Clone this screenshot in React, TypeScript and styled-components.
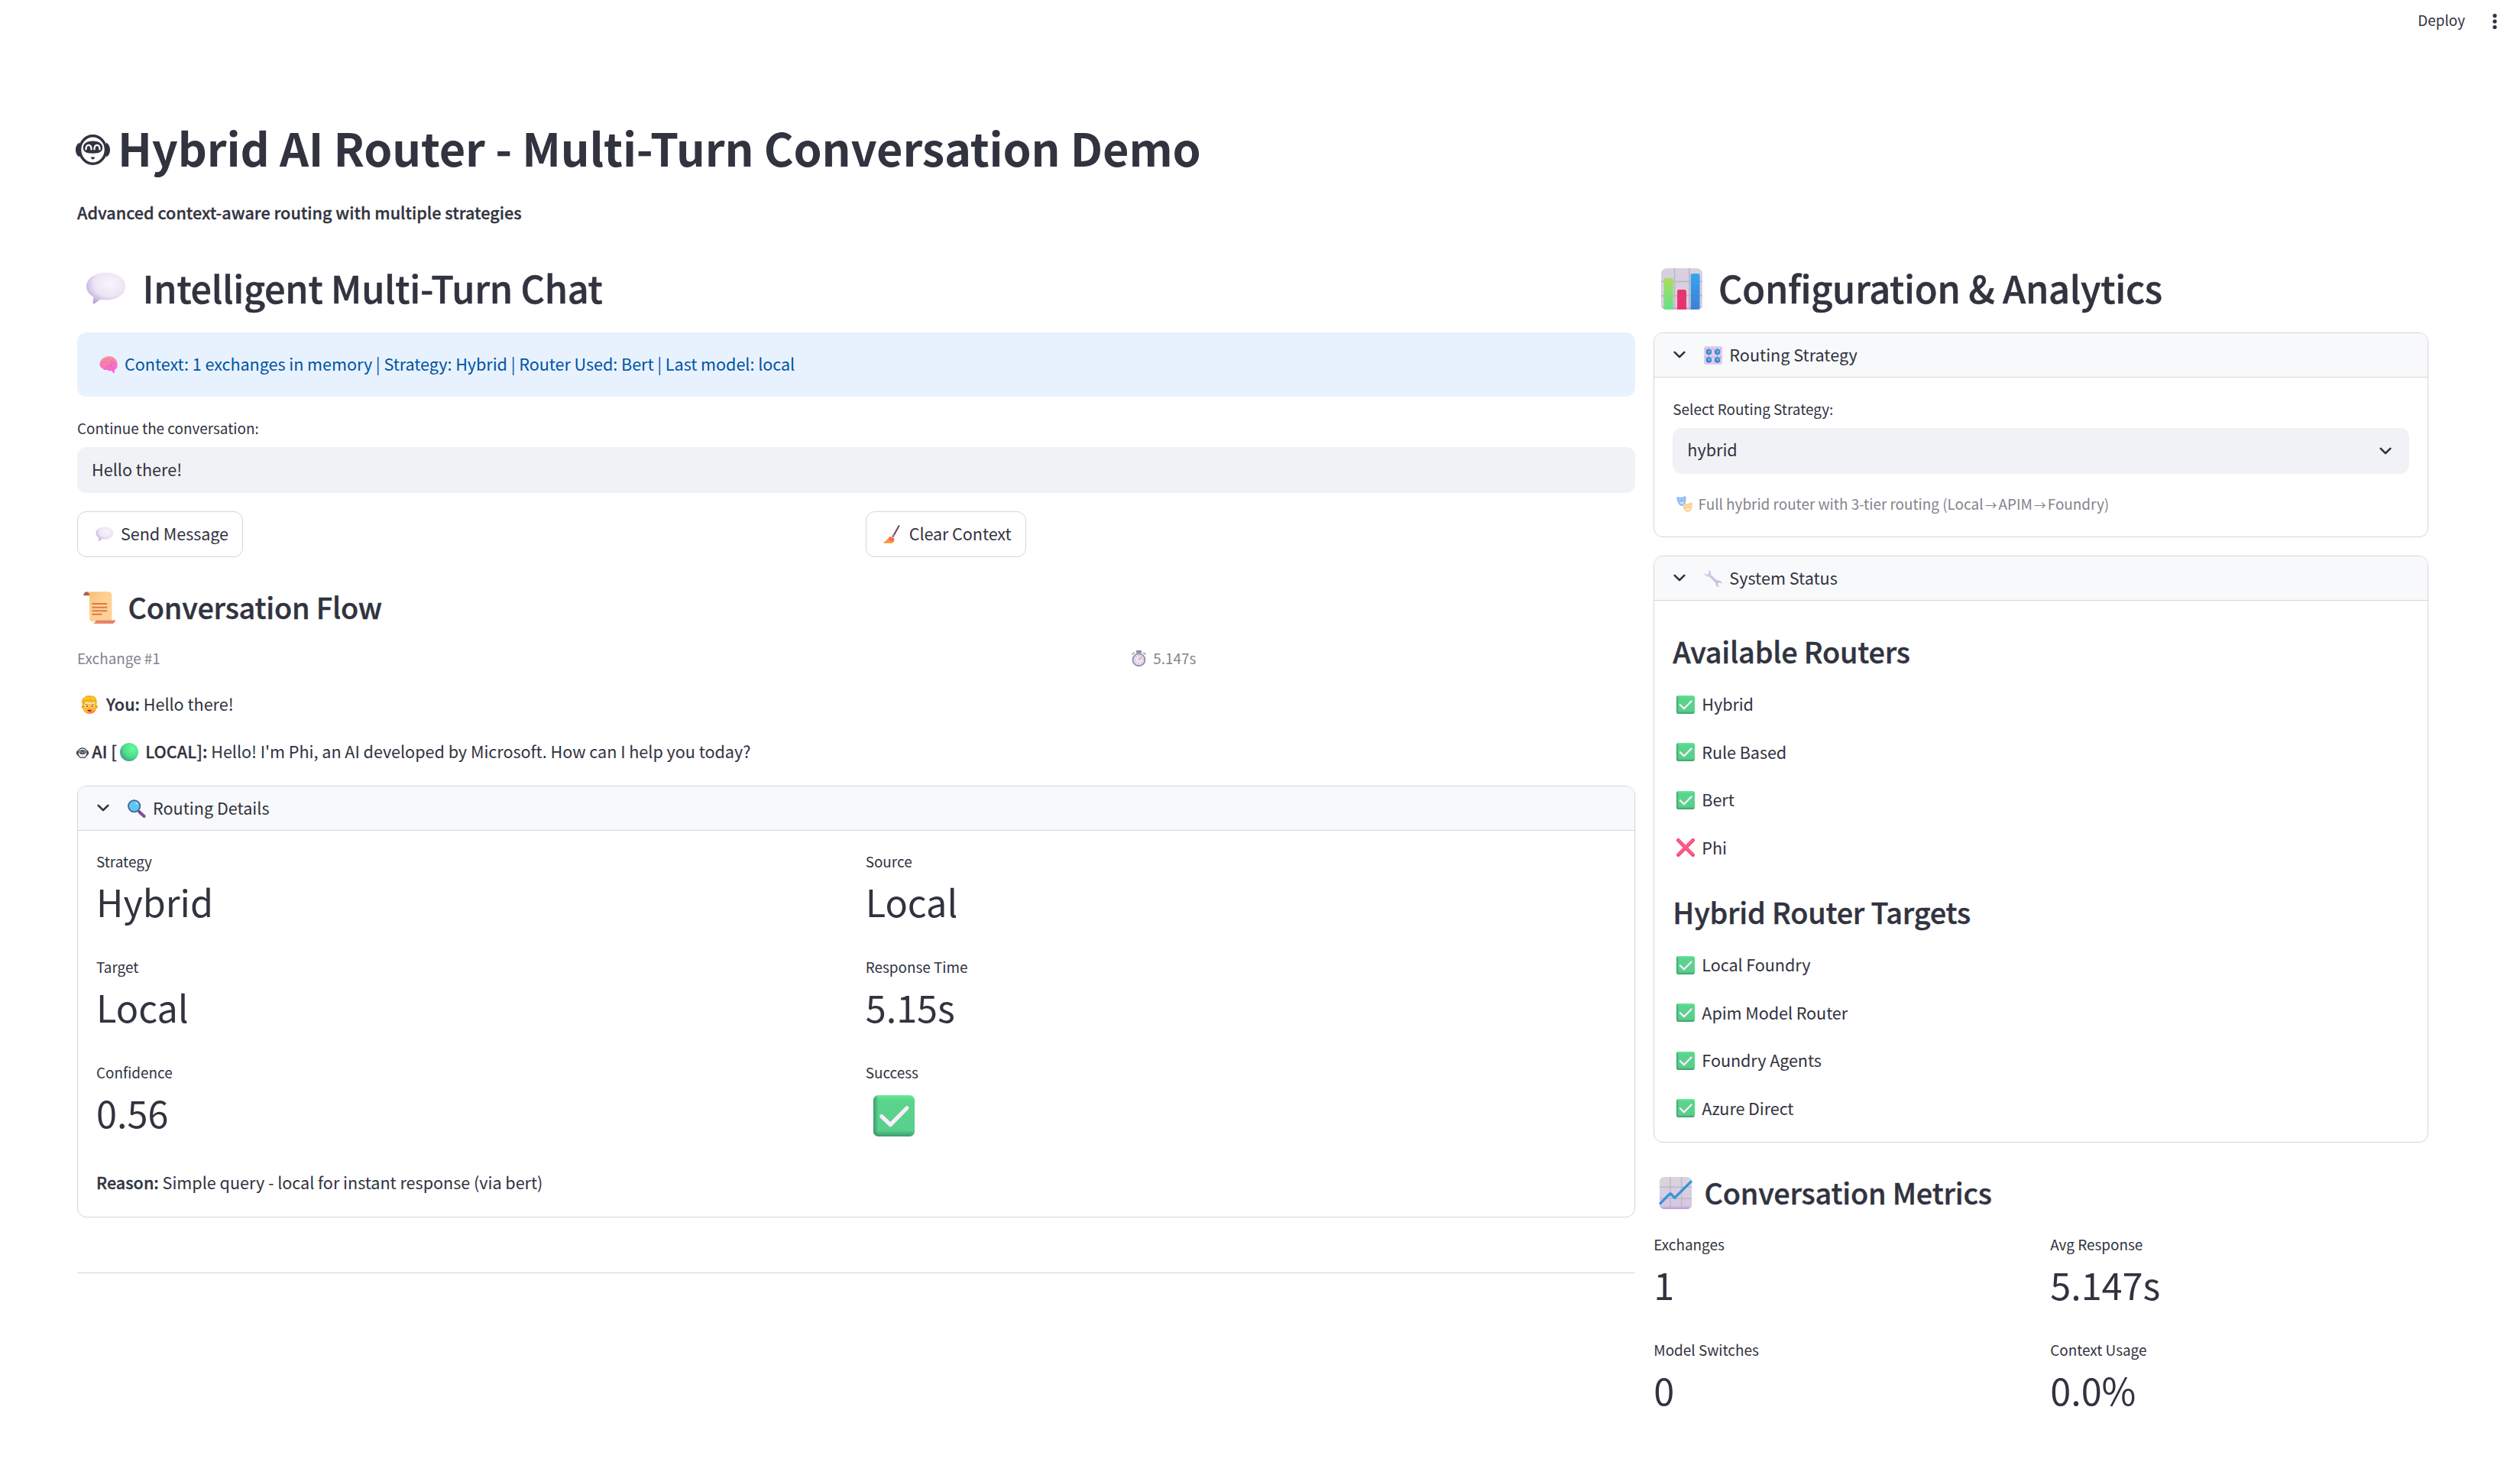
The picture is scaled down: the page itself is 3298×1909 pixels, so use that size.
import React from 'react';
import styled, { createGlobalStyle } from 'styled-components';

const ink = '#31333f';
const line = '#d6d6d9';

const GlobalStyle = createGlobalStyle`
  *, *::before, *::after { box-sizing: border-box; }
  body {
    margin: 0;
    background: #fff;
    color: ${ink};
    font-family: "Noto Sans CJK SC", "Noto Sans", sans-serif;
    font-size: 21.6px;
    font-weight: 400;
  }
`;

/* ---------- page frame ---------- */

const Page = styled.div`
  height: 1909px;
  overflow: hidden;
`;

const TopBar = styled.header`
  height: 90px;
  padding: 10px 23px 0 0;
  display: flex;
  justify-content: flex-end;
  align-items: flex-start;
  gap: 29px;
`;

const DeployLabel = styled.span`
  font-size: 18.9px;
  line-height: 31px;
`;

const MenuDots = styled.svg`
  width: 20px;
  height: 36px;
  display: block;
`;

const Main = styled.main`
  padding: 62px 120px 0 101px;
`;

const Title = styled.h1`
  margin: 0 0 27px;
  display: flex;
  align-items: flex-start;
  font-size: 59.4px;
  line-height: 80px;
  font-weight: 700;
  letter-spacing: -0.15px;
`;

const Columns = styled.div`
  margin-top: 47px;
  display: grid;
  grid-template-columns: 2039.33px 1fr;
  column-gap: 24px;
  align-items: start;
`;

const Column = styled.section`
  display: flex;
  flex-direction: column;
`;

const Halves = styled.div<{ $top?: number; $row?: number }>`
  display: grid;
  grid-template-columns: 1fr 1fr;
  column-gap: 24px;
  row-gap: ${p => p.$row ?? 0}px;
  margin-top: ${p => p.$top ?? 0}px;
  justify-items: start;
`;

/* ---------- text ---------- */

const H2 = styled.h2`
  margin: 0;
  font-size: 48.6px;
  line-height: 66px;
  font-weight: 500;
  letter-spacing: -0.25px;
  -webkit-text-stroke: 0.5px ${ink};
  white-space: nowrap;
`;

const H3 = styled.h3<{ $top: number }>`
  margin: ${p => p.$top}px 0 0;
  font-size: 37.8px;
  line-height: 51px;
  font-weight: 500;
  letter-spacing: -0.19px;
  -webkit-text-stroke: 0.4px ${ink};
  white-space: nowrap;
`;

const Text = styled.p<{ $top?: number }>`
  margin: ${p => p.$top ?? 0}px 0 0;
  line-height: 37px;
  letter-spacing: -0.03px;
  white-space: nowrap;
`;

const Strong = styled.strong`
  font-weight: 500;
  letter-spacing: 0;
  -webkit-text-stroke: 0.3px ${ink};
`;

const Label = styled.div<{ $top?: number }>`
  margin-top: ${p => p.$top ?? 0}px;
  font-size: 18.9px;
  line-height: 31px;
`;

const Caption = styled(Label)`
  color: #83848c;
  white-space: nowrap;
`;

const Arrow = styled.span`
  font-size: 15.5px;
  line-height: 1;
  margin: 0 -2px;
`;

/* ---------- widgets ---------- */

const Info = styled.div`
  margin-top: 26px;
  height: 84px;
  padding: 22px 24px 0;
  border-radius: 12px;
  background: #e8f2fe;
  color: #0054a3;
  line-height: 37px;
  letter-spacing: -0.05px;
  white-space: nowrap;
`;

const Field = styled.div<{ $top: number; $pad: number }>`
  margin-top: ${p => p.$top}px;
  height: 60px;
  padding: ${p => p.$pad}px 19px 0;
  border-radius: 12px;
  background: #f0f2f6;
  line-height: 37px;
  display: flex;
  justify-content: space-between;
`;

const Button = styled.button`
  height: 60px;
  padding: 9px 18px 12px 18px;
  border: 1px solid ${line};
  border-radius: 12px;
  background: #fff;
  color: ${ink};
  font: inherit;
  line-height: 37px;
  letter-spacing: -0.08px;
  display: flex;
  align-items: flex-start;
  white-space: nowrap;
`;

const Panel = styled.section<{ $top: number; $height: number }>`
  margin-top: ${p => p.$top}px;
  height: ${p => p.$height}px;
  border: 1px solid ${line};
  border-radius: 12px;
  overflow: hidden;
`;

const PanelHeader = styled.div`
  height: 58px;
  padding: 9px 21px 0;
  border-bottom: 1px solid ${line};
  background: #f8f9fb;
  line-height: 37px;
  display: flex;
  align-items: flex-start;
  white-space: nowrap;
`;

const PanelBody = styled.div<{ $top: number }>`
  padding: ${p => p.$top}px 24px 0;
`;

const HeaderChevron = styled.svg`
  width: 24px;
  height: 24px;
  margin: 7px 15px 0 0;
`;

const FieldChevron = styled.svg`
  width: 24px;
  height: 24px;
  margin-top: 9px;
`;

const MetricValue = styled.div`
  margin-top: 4px;
  font-size: 48.6px;
  line-height: 66px;
  height: 66px;
`;

const StatusList = styled.ul`
  list-style: none;
  margin: 25px 0 0;
  padding: 0;
  display: flex;
  flex-direction: column;
  gap: 25.5px;
`;

const StatusItem = styled.li`
  height: 37px;
  line-height: 37px;
  letter-spacing: -0.08px;
`;

const ExchangeRow = styled.div`
  margin-top: 26px;
  display: grid;
  grid-template-columns: 1375px 1fr;
`;

const Divider = styled.hr`
  width: 100%;
  margin: 72px 0 0;
  border: 0;
  border-top: 1px solid ${line};
`;

/* ---------- pictograms ---------- */

const Glyph = styled.svg<{ $size: number; $drop?: number; $left?: number; $dim?: boolean }>`
  width: ${p => p.$size}px;
  height: ${p => p.$size}px;
  margin: 0 ${p => p.$size * 0.385}px 0 ${p => p.$left ?? p.$size * 0.2}px;
  vertical-align: ${p => -(p.$drop ?? p.$size * 0.15)}px;
  opacity: ${p => (p.$dim ? 0.6 : 1)};
  overflow: visible;
  flex: none;
`;

const RobotGlyph = styled.svg<{ $w: number; $h: number; $m: string; $drop: number }>`
  width: ${p => p.$w}px;
  height: ${p => p.$h}px;
  margin: ${p => p.$m};
  vertical-align: ${p => p.$drop}px;
  flex: none;
`;

const art: Record<string, React.ReactNode> = {
  bubble: (
    <>
      <defs>
        <radialGradient id="bub" cx="0.6" cy="0.35" r="0.7">
          <stop offset="0" stopColor="#f8f5fa" />
          <stop offset="0.6" stopColor="#ece4f3" />
          <stop offset="1" stopColor="#b7a4dc" />
        </radialGradient>
      </defs>
      <path d="M15 3.200C7 3.200.6 7.400.6 13c0 3.300 2 6 5.200 7.800L5.300 25c0 .9.7 1 1.400.5l4-2.900c1.400.300 2.800.4 4.300.4 8 0 14-4.400 14-10S23 3.200 15 3.200z" fill="url(#bub)" />
    </>
  ),
  brain: (
    <>
      <defs>
        <linearGradient id="brn" x1="0" y1="0" x2="0.3" y2="1">
          <stop offset="0" stopColor="#f7a08f" />
          <stop offset="0.5" stopColor="#f77fb0" />
          <stop offset="1" stopColor="#fb5fe0" />
        </linearGradient>
      </defs>
      <path d="M9 3C13 .5 20 .5 24 4c4 3 6 7 5.500 12 0 4-1.500 6.500-4.500 7.500L24.500 29c-2 .5-3-1.500-3.500-4-3 1-6 .5-8-1.500-3 1-6 0-7.500-2C1 19.500 0 16 .7 12.500 1.500 8 5 4 9 3z" fill="url(#brn)" />
      <path d="M3 15c2-5 6-6 10-4M9 7c4-2 8-1 10 3s5 3 7 2M12 20c1-4 6-5 9-2M20 14v5" fill="none" stroke="#e8559b" strokeWidth="1" strokeLinecap="round" opacity="0.7" />
    </>
  ),
  scroll: (
    <>
      <defs>
        <linearGradient id="scr" x1="0" y1="0" x2="1" y2="1">
          <stop offset="0" stopColor="#f6bd75" />
          <stop offset="0.5" stopColor="#ffd193" />
          <stop offset="1" stopColor="#ffcf9b" />
        </linearGradient>
      </defs>
      <path d="M3.500.2C1.500.2.200 1.700.200 3.800h6V2z" fill="#b5604a" />
      <path d="M3 .2h20.500c2 0 3.200 1.500 3.200 3.300V27H12c-3 2.500-6.200.8-6.200-2V4C5.800 2 5 .2 3 .2z" fill="url(#scr)" />
      <path d="M11.500 26.800h18c.6 0 .5.6.3 1-.6 1.400-1.600 2.200-3.300 2.200H9c1.600-.3 2.500-1.500 2.500-3.200z" fill="#e9836b" />
      <path d="M8.800 11.500h13M8.800 14.800h13M8.800 18h13M8.800 21.200h8" stroke="#d97a4a" strokeWidth="1.400" strokeLinecap="round" />
    </>
  ),
  timer: (
    <>
      <rect x="10" y="0" width="10" height="5" rx="1.500" fill="#4b3a6a" />
      <path d="M3 7l3-2.500M27 7l-3-2.500" stroke="#75658f" strokeWidth="2.500" strokeLinecap="round" />
      <circle cx="15" cy="17.500" r="11.300" fill="#ddd6e8" stroke="#58457c" strokeWidth="2.800" />
      <path d="M15 9v2.500M15 23.500V26M6.500 17.500H9M21 17.500h2.500M9 11.500l1.500 1.500M9 23.500l1.500-1.500M21 23.500L19.500 22" stroke="#75658f" strokeWidth="1.500" />
      <path d="M15 17.500l5.500-5.500" stroke="#ef3a6d" strokeWidth="2" strokeLinecap="round" />
    </>
  ),
  face: (
    <>
      <defs>
        <linearGradient id="fce" x1="0.2" y1="0" x2="0.5" y2="1">
          <stop offset="0" stopColor="#ffce3a" />
          <stop offset="0.7" stopColor="#fdb62f" />
          <stop offset="1" stopColor="#f2803c" />
        </linearGradient>
      </defs>
      <path d="M3 13h22v7c0 6-4.500 10-11 10S3 26 3 20z" fill="url(#fce)" />
      <ellipse cx="2.800" cy="18.500" rx="2" ry="2.800" fill="#f5a030" />
      <ellipse cx="25.200" cy="18.500" rx="2" ry="2.800" fill="#f5a030" />
      <path d="M2.500 16C0 8 2 4 6 3c2-3 6-3.500 9-2.500 5-1 9 1.500 10 5.500 1.500 3 1 7 .2 10-1.700-1-2.700-3-3.200-5-5 1.500-10 1-14-.5C7.500 13 5 14.500 2.500 16z" fill="#f4b41f" />
      <path d="M6 6c3-2 6-2 9-1M17 4c2 0 4 1 5 3" stroke="#ffd95a" strokeWidth="1.500" fill="none" />
      <path d="M7.500 14.500l3-.5M17.500 14l3 .5" stroke="#a8652a" strokeWidth="1.200" />
      <circle cx="9.500" cy="17.500" r="2.200" fill="#fff" />
      <circle cx="18.700" cy="17.500" r="2.200" fill="#fff" />
      <circle cx="9.800" cy="17.500" r="1.400" fill="#4a2f3c" />
      <circle cx="18.400" cy="17.500" r="1.400" fill="#4a2f3c" />
      <path d="M10.500 23.500h7c-.5 2.200-2 2.900-3.500 2.900s-3-.7-3.500-2.900z" fill="#b5123c" />
    </>
  ),
  green: (
    <>
      <defs>
        <radialGradient id="grn" cx="0.68" cy="0.3" r="0.8">
          <stop offset="0" stopColor="#66fa9c" />
          <stop offset="0.6" stopColor="#4fdc8c" />
          <stop offset="1" stopColor="#3f9188" />
        </radialGradient>
      </defs>
      <circle cx="15" cy="15" r="15" fill="url(#grn)" />
    </>
  ),
  search: (
    <>
      <path d="M19.500 20.500l7.500 7" stroke="#8c4f96" strokeWidth="5.200" strokeLinecap="round" />
      <path d="M17 18l4 4" stroke="#5f4a80" strokeWidth="3" />
      <circle cx="10.800" cy="11" r="9.600" fill="#5cc8f0" stroke="#4d5fa5" strokeWidth="2.200" />
      <path d="M14 5.500l2 2" stroke="#b7ecff" strokeWidth="2" strokeLinecap="round" />
    </>
  ),
  bars: (
    <>
      <defs>
        <linearGradient id="bg1" x1="0" y1="0" x2="0" y2="1">
          <stop offset="0" stopColor="#a9de5a" />
          <stop offset="1" stopColor="#66e08c" />
        </linearGradient>
        <linearGradient id="bg2" x1="0" y1="0" x2="0" y2="1">
          <stop offset="0" stopColor="#36a4f0" />
          <stop offset="1" stopColor="#3d7fd6" />
        </linearGradient>
      </defs>
      <rect width="30" height="30" rx="4" fill="#d8d0e0" />
      <path d="M9.700 0v30M20.500 0v30M0 9.700h30M0 20h30" stroke="#bdb9c2" strokeWidth="1" />
      <path d="M0 26c0 2.500 1.500 4 4 4h22c2.500 0 4-1.500 4-4v1c0 0-1 1.500-4 1.500H4C1 28.500 0 27 0 26z" fill="#c3aad8" />
      <path d="M2 8.400c0-.8.5-1.300 1.300-1.300h4.100c.8 0 1.300.5 1.300 1.300V30H4c-1 0-1.500-.2-2-.5z" fill="url(#bg1)" />
      <path d="M11.700 16.900c0-.8.5-1.300 1.300-1.300h4c.8 0 1.300.5 1.300 1.300V30h-6.600z" fill="#e9336f" />
      <path d="M21.500 5.200c0-.8.5-1.300 1.300-1.300h4c.8 0 1.300.5 1.300 1.300v24.300c-.6.400-1.300.5-2 .5h-4.600z" fill="url(#bg2)" />
    </>
  ),
  trend: (
    <>
      <defs>
        <linearGradient id="trd" x1="0" y1="0" x2="0" y2="1">
          <stop offset="0" stopColor="#dad5de" />
          <stop offset="0.9" stopColor="#d6c6e4" />
          <stop offset="1" stopColor="#b797d2" />
        </linearGradient>
      </defs>
      <rect width="30" height="30" rx="4" fill="url(#trd)" />
      <path d="M10 0v29M20.400 0v29M0 9.500h30M0 20.200h30" stroke="#bdb9c2" strokeWidth="1" />
      <path d="M0 25.400l9-9.200c.6-.7 1.300-.7 1.900 0l3.100 3.300L30 3.600" fill="none" stroke="#3592dc" strokeWidth="2.300" strokeLinejoin="round" />
    </>
  ),
  knobs: (
    <>
      <rect width="30" height="30" rx="3.500" fill="#dccfea" />
      {[[8, 9.5], [22, 9.5], [8, 22.5], [22, 22.5]].map(([x, y]) => (
        <g key={`${x}-${y}`}>
          <path d={`M${x - 4.5} ${y - 4}l-1-1.500M${x} ${y - 5}v-2M${x + 4.5} ${y - 4}l1-1.500`} stroke="#7d7294" strokeWidth="1.200" />
          <circle cx={x} cy={y} r="4.700" fill="#3f83cf" />
          <circle cx={x + 0.5} cy={y - 0.5} r="2.200" fill="#6ab4f0" />
        </g>
      ))}
    </>
  ),
  masks: (
    <>
      <path d="M.5 1.500C6 3 11 3 17.500 0c1 9 0 17-6.500 19C4 18 .5 10 .5 1.500z" fill="#3f93f2" />
      <path d="M4.500 7.500c1-.8 2-.8 3 0M11 6.500c1-.8 2-.8 3 0M6 11.500c2.500 1.500 5 1 7.500-.8-.7 3.800-5.800 4.800-7.500.8z" fill="#e8f4ff" stroke="#e8f4ff" strokeWidth="0.800" />
      <path d="M12.500 14c6 1 11 .5 17-2.500 1 9-1 17.500-8 18.500-7-1-9.500-8-9-16z" fill="#fdb24a" />
      <path d="M16.500 19.500l3-.6M23.500 18.500l3-.9M17.500 26c1.500-3 5.500-3.500 7.500-.8-2.500-.8-5-.6-7.500.8z" stroke="#fff" fill="#fff" strokeWidth="1" />
    </>
  ),
  wrench: (
    <>
      <defs>
        <linearGradient id="wrn" x1="0" y1="0" x2="1" y2="1">
          <stop offset="0" stopColor="#dcd4e4" />
          <stop offset="0.5" stopColor="#cdbfe2" />
          <stop offset="1" stopColor="#c9b9d4" />
        </linearGradient>
      </defs>
      <path d="M7 .8c4 .4 5.500 4 4 7.500L21.500 18.500c4-1.200 8 1 8 5l-4-2.500-3 2 .5 3.500 3 1.700c-4 1.300-7.500-1.700-6.700-6L8.500 11.500C4.500 12.500.8 10 .8 6l3.500 2.300 3.200-1.500.7-3z" fill="url(#wrn)" />
    </>
  ),
  check: (
    <>
      <defs>
        <linearGradient id="chk" x1="0" y1="0" x2="0" y2="1">
          <stop offset="0" stopColor="#66ea9b" />
          <stop offset="0.12" stopColor="#5ad58c" />
          <stop offset="0.85" stopColor="#58d08c" />
          <stop offset="1" stopColor="#3f9a6d" />
        </linearGradient>
        <linearGradient id="chl" x1="0" y1="0" x2="1" y2="0">
          <stop offset="0" stopColor="#3a8f66" stopOpacity="0.85" />
          <stop offset="0.12" stopColor="#3a8f66" stopOpacity="0" />
        </linearGradient>
      </defs>
      <rect width="30" height="30" rx="3.600" fill="url(#chk)" />
      <rect width="30" height="30" rx="3.600" fill="url(#chl)" />
      <path d="M6 15.300l6.400 6.200L24.400 9.300" fill="none" stroke="#fbeefb" strokeWidth="2.900" strokeLinecap="round" strokeLinejoin="round" />
    </>
  ),
  cross: (
    <>
      <path d="M3 3l24 24M27 3L3 27" stroke="#f6416f" strokeWidth="6" strokeLinecap="round" />
      <path d="M3.500 2.800l23 23.200M26.500 2.800L3.500 26" stroke="#ff5f86" strokeWidth="3.200" strokeLinecap="round" />
    </>
  ),
  broom: (
    <>
      <path d="M25.500 1.500L17 17" stroke="#7c4653" strokeWidth="2.600" strokeLinecap="round" />
      <path d="M17.800 15l-2.800 5" stroke="#8f86ab" strokeWidth="3.600" />
      <path d="M10.500 18.500l7.500 3.500c.5 3-1 5.500-2.500 7.800H1c-1 0-1-.8-.4-1.300C4.500 25.500 8 22.500 10.500 18.500z" fill="#fd9a3e" />
      <path d="M10 20l7.300 3.500M8.500 22.500l8 3.500" stroke="#f4495d" strokeWidth="1.700" />
      <path d="M5 29l4-4M10 29l3-3" stroke="#f2703f" strokeWidth="1" />
    </>
  ),
};

type EmojiProps = { name: string; size?: number; drop?: number; left?: number; dim?: boolean };

function Emoji({ name, size = 24, drop, left, dim }: EmojiProps) {
  return (
    <Glyph viewBox="0 0 30 30" $size={size} $drop={drop} $left={left} $dim={dim} aria-hidden>
      {art[name]}
    </Glyph>
  );
}

function Robot(props: { w: number; h: number; m: string; drop: number }) {
  return (
    <RobotGlyph viewBox="0 0 45 40" $w={props.w} $h={props.h} $m={props.m} $drop={props.drop} aria-hidden>
      <path d="M5 10.500C2 12 0 15.500 0 20s2 8 5 9.500zM40 10.500c3 1.500 5 5 5 9.500s-2 8-5 9.500z" fill={ink} />
      <ellipse cx="22.500" cy="20" rx="17" ry="18.200" fill="#fff" stroke={ink} strokeWidth="3.600" />
      <path d="M22.500 8.500c7.500 0 12.700 3.200 12.700 8.500 0 5.200-3.500 7.700-12.700 7.700S9.800 22.200 9.800 17c0-5.300 5.200-8.500 12.700-8.500z" fill={ink} />
      <path d="M13.500 19.500c0-7.500 7-7.500 7 0M24.500 19.500c0-7.500 7-7.500 7 0" fill="none" stroke="#fff" strokeWidth="2.200" strokeLinecap="round" />
      <path d="M20 29.500h5c0 2-1 3-2.500 3s-2.500-1-2.500-3z" fill={ink} />
    </RobotGlyph>
  );
}

const chevronPath = (
  <path d="M5.700 8.900L12 15.100l6.300-6.200" fill="none" stroke={ink} strokeWidth="2.700" strokeLinecap="round" strokeLinejoin="round" />
);

/* ---------- composed parts ---------- */

function Expander(props: { icon: string; title: string; top: number; height: number; pad: number; children: React.ReactNode }) {
  return (
    <Panel $top={props.top} $height={props.height}>
      <PanelHeader>
        <HeaderChevron viewBox="0 0 24 24">{chevronPath}</HeaderChevron>
        <span>
          <Emoji name={props.icon} />
          {props.title}
        </span>
      </PanelHeader>
      <PanelBody $top={props.pad}>{props.children}</PanelBody>
    </Panel>
  );
}

function Metric({ label, value }: { label: string; value: React.ReactNode }) {
  return (
    <div>
      <Label>{label}</Label>
      <MetricValue>{value}</MetricValue>
    </div>
  );
}

function Statuses({ items }: { items: [string, boolean][] }) {
  return (
    <StatusList>
      {items.map(([name, ok]) => (
        <StatusItem key={name}>
          <Emoji name={ok ? 'check' : 'cross'} />
          {name}
        </StatusItem>
      ))}
    </StatusList>
  );
}

export default function App() {
  return (
    <Page>
      <GlobalStyle />
      <TopBar>
        <DeployLabel>Deploy</DeployLabel>
        <MenuDots viewBox="0 0 20 36">
          <circle cx="10" cy="10.500" r="2.600" fill={ink} />
          <circle cx="10" cy="18" r="2.600" fill={ink} />
          <circle cx="10" cy="25.500" r="2.600" fill={ink} />
        </MenuDots>
      </TopBar>
      <Main>
        <Title>
          <Robot w={45} h={40} m="24px 10.5px 0 -2.5px" drop={0} />
          <span>Hybrid AI Router - Multi-Turn Conversation Demo</span>
        </Title>
        <Text>
          <Strong>Advanced context-aware routing with multiple strategies</Strong>
        </Text>
        <Columns>
          <Column>
            <H2>
              <Emoji name="bubble" size={54} />
              Intelligent Multi-Turn Chat
            </H2>
            <Info>
              <Emoji name="brain" />
              Context: 1 exchanges in memory | Strategy: Hybrid | Router Used: Bert | Last model: local
            </Info>
            <Label $top={25}>Continue the conversation:</Label>
            <Field $top={10} $pad={10}>Hello there!</Field>
            <Halves $top={24}>
              <Button>
                <span>
                  <Emoji name="bubble" />
                  Send Message
                </span>
              </Button>
              <Button>
                <span>
                  <Emoji name="broom" />
                  Clear Context
                </span>
              </Button>
            </Halves>
            <H3 $top={39}>
              <Emoji name="scroll" size={42} />
              Conversation Flow
            </H3>
            <ExchangeRow>
              <Caption>Exchange #1</Caption>
              <Caption>
                <Emoji name="timer" size={21} dim />
                5.147s
              </Caption>
            </ExchangeRow>
            <Text $top={26}>
              <Emoji name="face" />
              <Strong>You:</Strong> Hello there!
            </Text>
            <Text $top={25}>
              <Robot w={16} h={14.5} m="0 4px 0 -0.7px" drop={0} />
              <Strong>
                AI [<Emoji name="green" left={4} />
                LOCAL]:
              </Strong>{' '}
              Hello! I'm Phi, an AI developed by Microsoft. How can I help you today?
            </Text>
            <Expander icon="search" title="Routing Details" top={27} height={565} pad={24}>
              <Halves $row={37}>
                <Metric label="Strategy" value="Hybrid" />
                <Metric label="Source" value="Local" />
                <Metric label="Target" value="Local" />
                <Metric label="Response Time" value="5.15s" />
                <Metric label="Confidence" value="0.56" />
                <Metric label="Success" value={<Emoji name="check" size={54} drop={11} left={10} />} />
              </Halves>
              <Text $top={40}>
                <Strong>Reason:</Strong> Simple query - local for instant response (via bert)
              </Text>
            </Expander>
            <Divider />
          </Column>
          <Column>
            <H2>
              <Emoji name="bars" size={54} left={10} />
              Configuration &amp; Analytics
            </H2>
            <Expander icon="knobs" title="Routing Strategy" top={26} height={268} pad={25}>
              <Label>Select Routing Strategy:</Label>
              <Field $top={10} $pad={9}>
                <span>hybrid</span>
                <FieldChevron viewBox="0 0 24 24">{chevronPath}</FieldChevron>
              </Field>
              <Caption $top={23}>
                <Emoji name="masks" size={21} dim />
                Full hybrid router with 3-tier routing (Local <Arrow>→</Arrow> APIM <Arrow>→</Arrow> Foundry)
              </Caption>
            </Expander>
            <Expander icon="wrench" title="System Status" top={24} height={768} pad={0}>
              <H3 $top={40}>Available Routers</H3>
              <Statuses items={[['Hybrid', true], ['Rule Based', true], ['Bert', true], ['Phi', false]]} />
              <H3 $top={40.5}>Hybrid Router Targets</H3>
              <Statuses
                items={[['Local Foundry', true], ['Apim Model Router', true], ['Foundry Agents', true], ['Azure Direct', true]]}
              />
            </Expander>
            <H3 $top={39}>
              <Emoji name="trend" size={42} left={8} />
              Conversation Metrics
            </H3>
            <Halves $top={27} $row={37}>
              <Metric label="Exchanges" value="1" />
              <Metric label="Avg Response" value="5.147s" />
              <Metric label="Model Switches" value="0" />
              <Metric label="Context Usage" value="0.0%" />
            </Halves>
          </Column>
        </Columns>
      </Main>
    </Page>
  );
}
